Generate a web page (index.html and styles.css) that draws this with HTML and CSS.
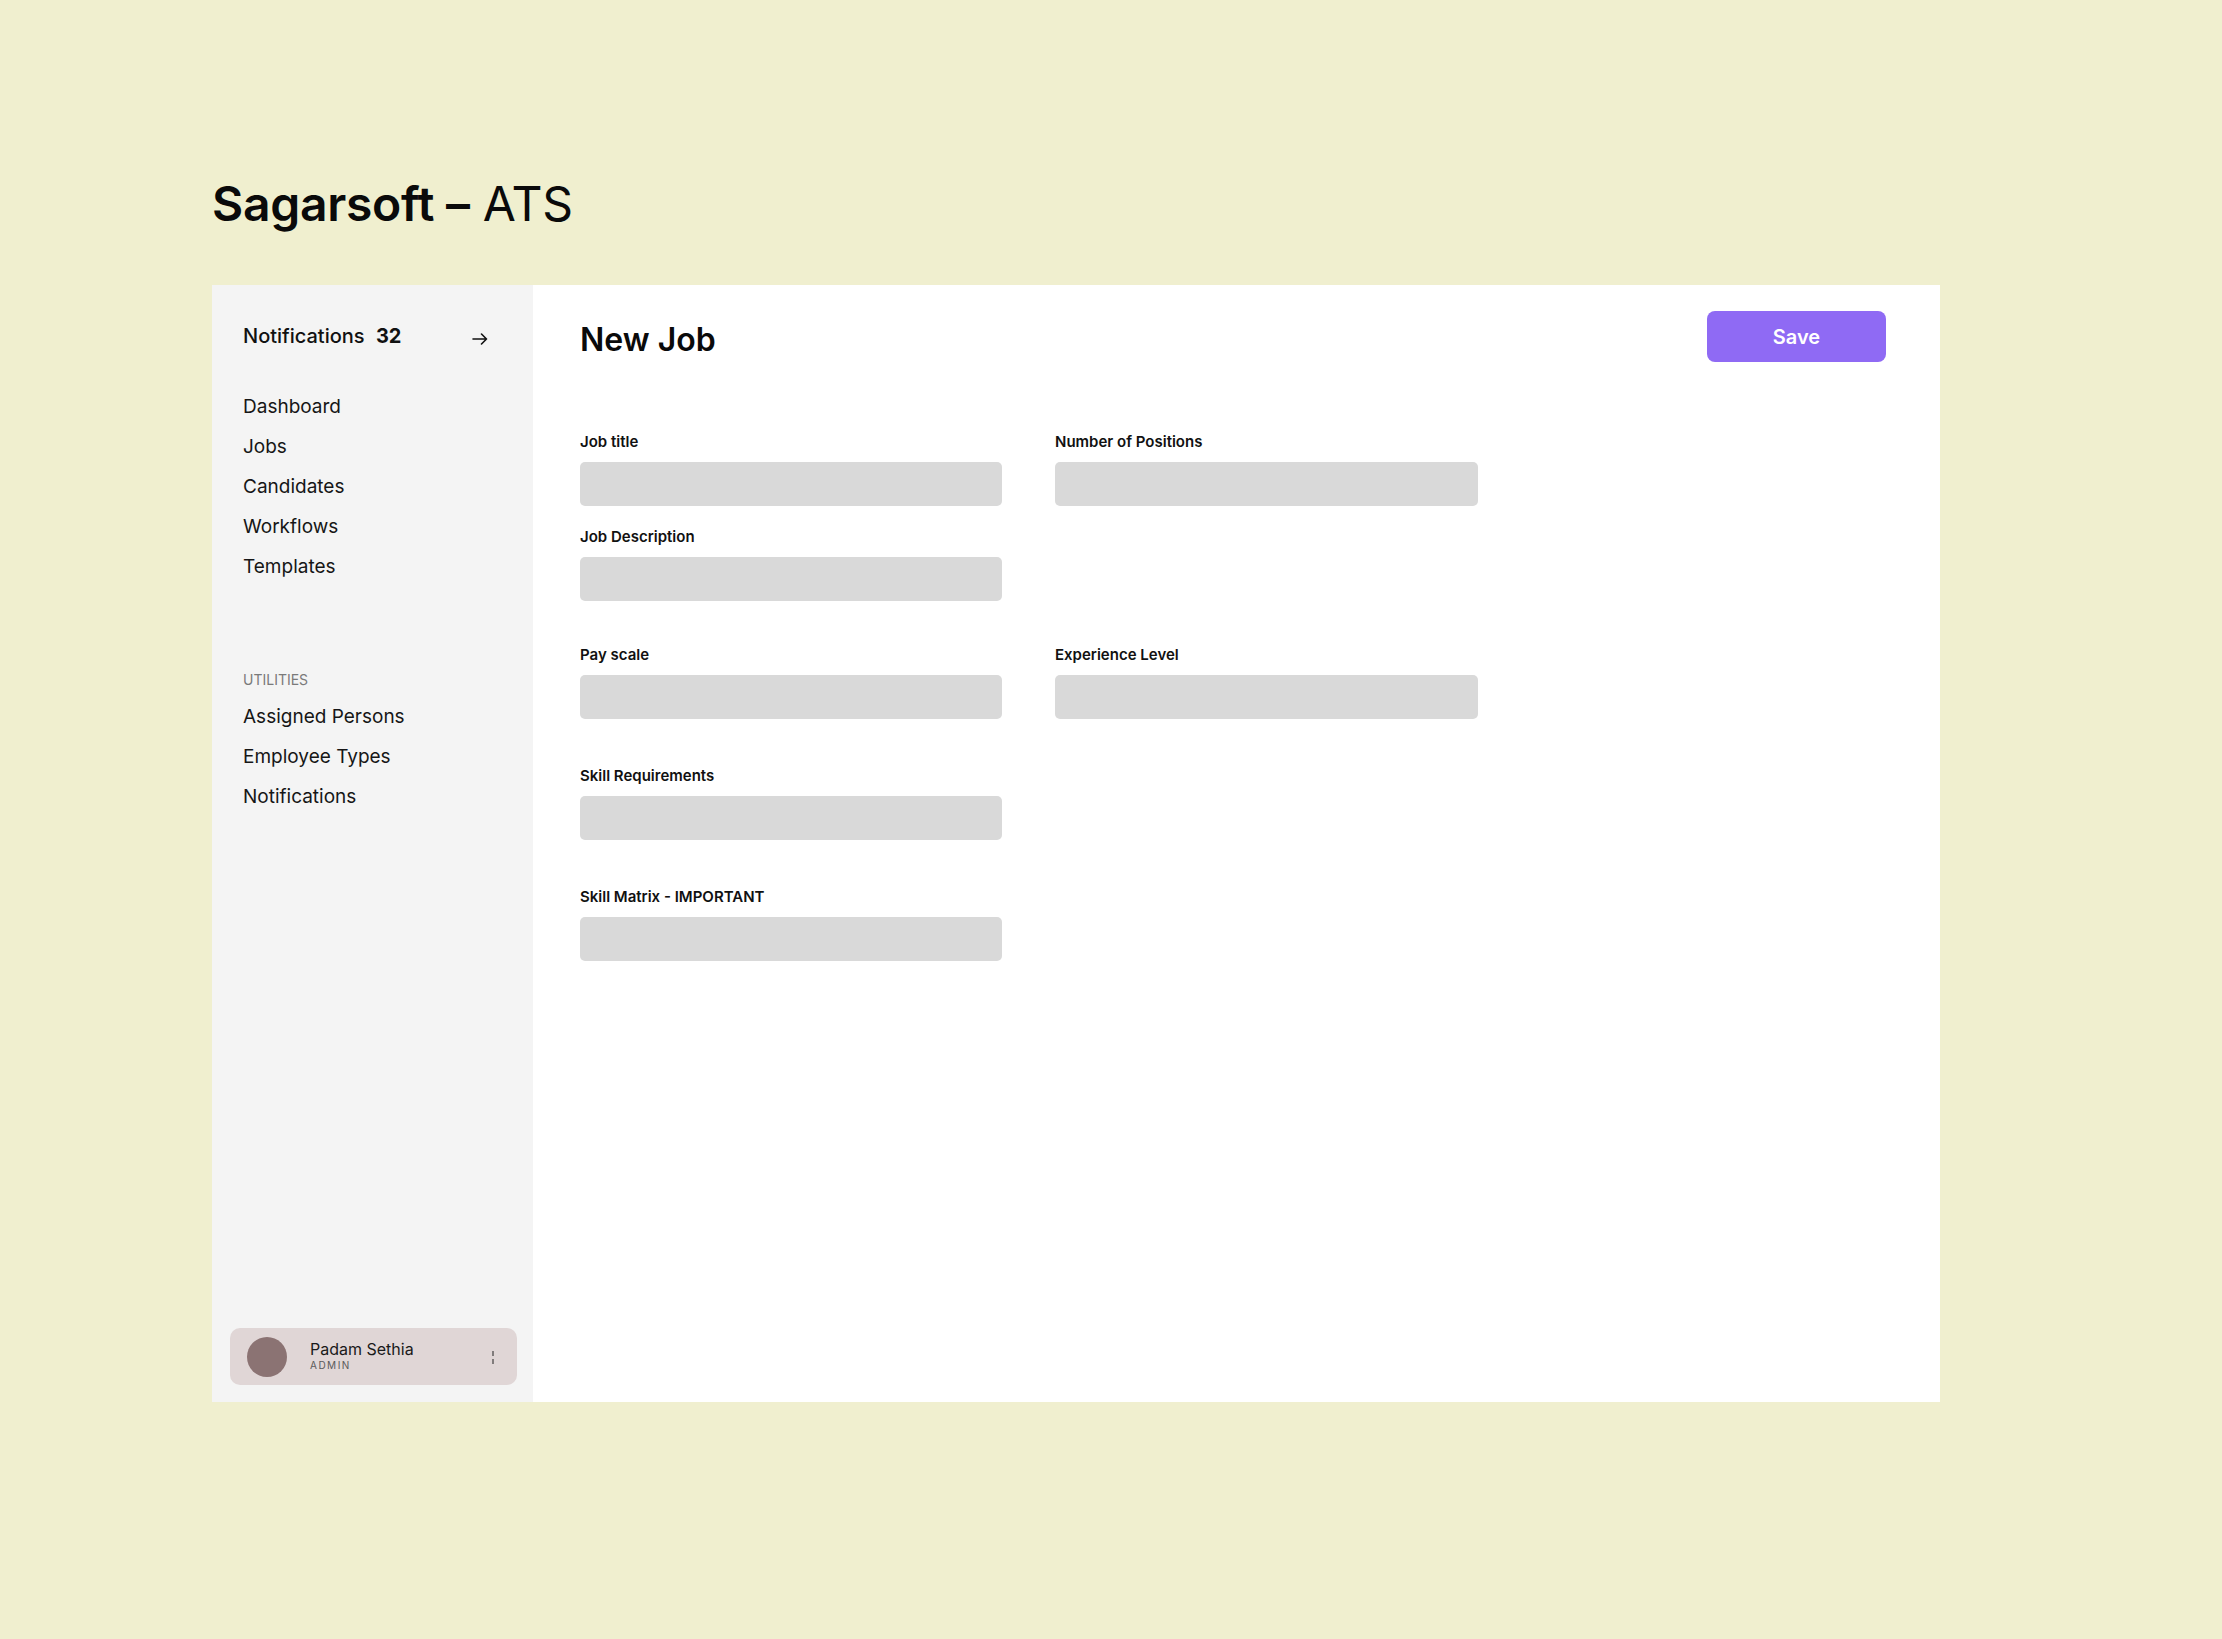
FILE: index.html
```html
<!DOCTYPE html>
<html lang="en">
<head>
<meta charset="utf-8">
<title>Sagarsoft – ATS</title>
<link rel="stylesheet" href="styles.css">
</head>
<body>
<div class="page">
  <h1 class="app-title"><span class="brand">Sagarsoft –</span> <span class="product">ATS</span></h1>
  <div class="card">
    <aside class="sidebar">
      <div class="side-top">
        <div class="notif-row">
          <span class="notif-label">Notifications <b class="notif-count">32</b></span>
          <svg class="arrow" width="16" height="12" viewBox="0 0 16 12" aria-hidden="true"><path d="M1 6H14.5M9.5 1L14.5 6L9.5 11" fill="none" stroke="#111" stroke-width="1.6" stroke-linecap="round" stroke-linejoin="round"/></svg>
        </div>
        <nav class="nav">
          <a class="nav-item">Dashboard</a>
          <a class="nav-item">Jobs</a>
          <a class="nav-item">Candidates</a>
          <a class="nav-item">Workflows</a>
          <a class="nav-item">Templates</a>
        </nav>
        <div class="section-title">UTILITIES</div>
        <nav class="nav nav-utils">
          <a class="nav-item">Assigned Persons</a>
          <a class="nav-item">Employee Types</a>
          <a class="nav-item">Notifications</a>
        </nav>
      </div>
      <div class="user-card">
        <div class="avatar"></div>
        <div class="user-info">
          <div class="user-name">Padam Sethia</div>
          <div class="user-role">ADMIN</div>
        </div>
        <svg class="kebab" width="2" height="14" viewBox="0 0 2 14" aria-hidden="true"><rect x="0.5" y="0" width="1" height="5" fill="#222"/><rect x="0.5" y="8" width="1" height="5" fill="#222"/></svg>
      </div>
    </aside>
    <main class="main">
      <div class="main-header">
        <h2 class="page-title">New Job</h2>
        <button class="btn-save">Save</button>
      </div>
      <form class="form">
        <div class="row">
          <div class="field"><label class="label">Job title</label><div class="input"></div></div>
          <div class="field"><label class="label">Number of Positions</label><div class="input"></div></div>
        </div>
        <div class="row row-close">
          <div class="field"><label class="label">Job Description</label><div class="input"></div></div>
        </div>
        <div class="row row-mid">
          <div class="field"><label class="label">Pay scale</label><div class="input"></div></div>
          <div class="field"><label class="label">Experience Level</label><div class="input"></div></div>
        </div>
        <div class="row">
          <div class="field"><label class="label">Skill Requirements</label><div class="input"></div></div>
        </div>
        <div class="row">
          <div class="field"><label class="label">Skill Matrix - IMPORTANT</label><div class="input"></div></div>
        </div>
      </form>
    </main>
  </div>
</div>
</body>
</html>
```

FILE: styles.css
```css
* { box-sizing: border-box; }
html, body {
  margin: 0;
  padding: 0;
  background: #f0efcf;
  font-family: Inter, "Noto Sans", "Liberation Sans", sans-serif;
  color: #111;
}
.page {
  padding: 172px 0 0 212px;
}
.app-title {
  margin: 0;
  font-size: 48px;
  line-height: 64px;
  font-weight: 400;
  color: #0a0a0a;
  letter-spacing: -0.3px;
}
.brand { font-weight: 600; }
.product { font-weight: 400; }

.card {
  margin-top: 49px;
  width: 1728px;
  height: 1117px;
  display: flex;
  background: #ffffff;
}

/* Sidebar */
.sidebar {
  width: 321px;
  flex: none;
  background: #f4f4f4;
  padding: 39px 16px 17px 18px;
  display: flex;
  flex-direction: column;
}
.side-top { padding: 0 13px; }
.notif-row {
  display: flex;
  align-items: center;
  justify-content: space-between;
  margin-right: 16px;
  font-size: 20px;
  line-height: 24px;
  font-weight: 500;
}
.notif-count { font-weight: 700; margin-left: 6px; }
.arrow { margin-top: 5px; }
.nav {
  display: flex;
  flex-direction: column;
  margin-top: 39px;
}
.nav-item {
  font-size: 19px;
  line-height: 40px;
  color: #161616;
}
.section-title {
  margin-top: 84px;
  font-size: 14px;
  line-height: 17px;
  color: #7a7a7a;
}
.nav-utils { margin-top: 9px; }

.user-card {
  margin-top: auto;
  height: 57px;
  display: flex;
  align-items: center;
  padding: 0 23px 0 17px;
  background: #e0d6d6;
  border-radius: 10px;
}
.avatar {
  width: 40px;
  height: 40px;
  border-radius: 50%;
  background: #8b7373;
  flex: none;
}
.user-info { margin-left: 23px; margin-top: -2px; }
.user-name {
  font-size: 16px;
  line-height: 19px;
  color: #1a1a1a;
}
.user-role {
  font-size: 10px;
  line-height: 12px;
  letter-spacing: 1.5px;
  color: #5a5a5a;
}
.kebab { margin-left: auto; margin-top: 3px; }

/* Main */
.main {
  flex: 1;
  padding: 26px 54px 0 47px;
}
.main-header {
  display: flex;
  justify-content: space-between;
  align-items: flex-start;
}
.page-title {
  margin: 9px 0 0;
  font-size: 32px;
  line-height: 39px;
  font-weight: 600;
  color: #0a0a0a;
}
.btn-save {
  width: 179px;
  height: 51px;
  border: none;
  border-radius: 8px;
  background: #8f6af4;
  color: #ffffff;
  font-family: inherit;
  font-size: 20px;
  font-weight: 600;
  cursor: pointer;
}

.form {
  margin-top: 71px;
  display: flex;
  flex-direction: column;
}
.row {
  display: grid;
  grid-template-columns: 422px 423px;
  column-gap: 53px;
  margin-top: 48px;
}
.row:first-child { margin-top: 0; }
.row-close { margin-top: 22px; }
.row-mid { margin-top: 45px; }
.field {
  display: flex;
  flex-direction: column;
}
.label {
  font-size: 15px;
  line-height: 18px;
  font-weight: 600;
  color: #111;
  margin-bottom: 11px;
}
.input {
  height: 44px;
  background: #d9d9d9;
  border-radius: 5px;
}
```
